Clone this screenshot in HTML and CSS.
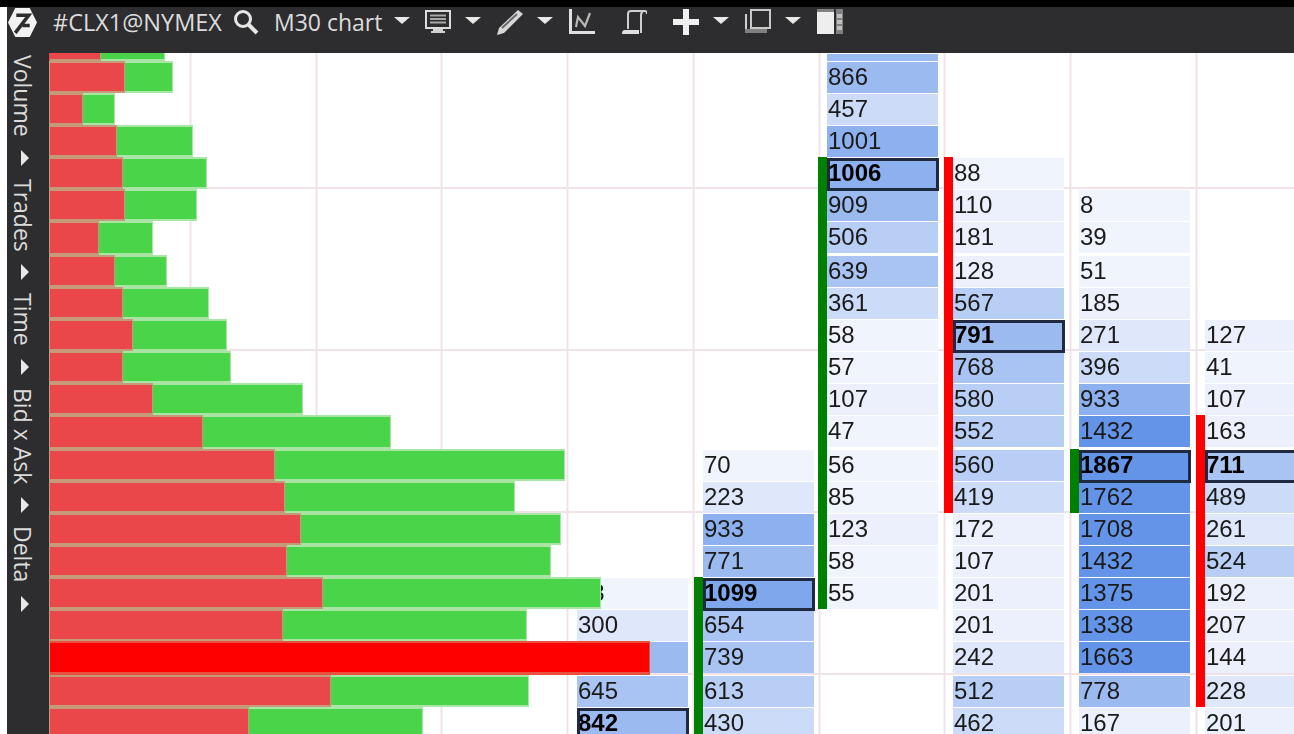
FILE: index.html
```html
<!DOCTYPE html>
<html lang="en">
<head>
    <title>#CLX1@NYMEX M30 chart</title>
    <meta charset="UTF-8">
    <meta name="viewport" content="width=device-width, initial-scale=1.0">
    <link rel="stylesheet" href="styles.css">
</head>
<body>
<div class="window">
    <div class="toolbar">
        <svg class="logo" viewBox="0 0 28 28"><path d="M7 0h14l7 14-7 14H7L0 14z" fill="#f2f2f2"/><path d="M8 7h12L7 24M14 17h7" fill="none" stroke="#2d2d2f" stroke-width="3.4"/></svg>
        <span class="symbol">#CLX1@NYMEX</span>
        <svg class="icon search" viewBox="0 0 26 26"><circle cx="10" cy="10" r="7.5" fill="none" stroke="#e6e6e6" stroke-width="3"/><path d="M15 15l9 9" stroke="#e6e6e6" stroke-width="4"/></svg>
        <span class="period">M30 chart</span>
        <i class="caret"></i>
        <svg class="icon monitor" viewBox="0 0 26 26"><path d="M1 2h24v17H1z" fill="none" stroke="#dcdcdc" stroke-width="2"/><path d="M5 6.500h16M5 10h16M5 13.500h16" stroke="#a8a8a8" stroke-width="2"/><path d="M8 20h10v2h2v2H6v-2h2z" fill="#d0d0d0"/></svg>
        <i class="caret"></i>
        <svg class="icon pencil" viewBox="0 0 26 26"><path d="M21 1l5 4L7 24l-7 2 2-7z" fill="#d8d8d8"/><path d="M5 19L20 5" stroke="#6a6a6a" stroke-width="2"/></svg>
        <i class="caret"></i>
        <svg class="icon stats" viewBox="0 0 26 26"><path d="M1.500 0v23.500H26" fill="none" stroke="#e0e0e0" stroke-width="3"/><path d="M7 18l2-10 7 9 5-13" fill="none" stroke="#b8b8b8" stroke-width="2.200"/></svg>
        <svg class="icon scroll" viewBox="0 0 26 26"><path d="M7 20V5c0-2 1-3 3-3h14c1 0 2 1 2 3M22 2c-1 1-2 2-2 4v18" fill="none" stroke="#cfcfcf" stroke-width="2"/><path d="M1 25c0-3 1-4 3-4h14v4z" fill="#e0e0e0"/></svg>
        <svg class="icon plus" viewBox="0 0 26 26"><path d="M13 0v26M0 13h26" stroke="#f0f0f0" stroke-width="6"/></svg>
        <i class="caret"></i>
        <svg class="icon windows" viewBox="0 0 26 26"><path d="M6 1h19v18H6z" fill="none" stroke="#c8c8c8" stroke-width="2"/><path d="M1 5v18" stroke="#d0d0d0" stroke-width="2"/><path d="M0 20h22v4H0z" fill="#808080"/></svg>
        <i class="caret"></i>
        <svg class="icon panels" viewBox="0 0 26 26"><path d="M0 0h26v25H0z" fill="#808080"/><path d="M0 3h17v22H0z" fill="#eeeeee"/><path d="M17 0h2v25h-2z" fill="#2d2d2f"/><path d="M20 5h5v4h-5zM20 11h5v4h-5zM20 17h5v4h-5z" fill="#c0c0c0"/></svg>
    </div>

    <div class="main">
        <div class="sidebar">
            <span class="side-label">Volume</span><i class="side-arrow"></i>
            <span class="side-label">Trades</span><i class="side-arrow"></i>
            <span class="side-label">Time</span><i class="side-arrow"></i>
            <span class="side-label">Bid x Ask</span><i class="side-arrow"></i>
            <span class="side-label">Delta</span><i class="side-arrow"></i>
        </div>

        <div class="chart">
            <div class="row first">
                <div class="bars"><b class="sell" style="width:51px"></b><b class="buy" style="width:64px"></b></div>
                <div class="slot"></div><div class="slot"></div>
                <div class="slot"><div class="cell s6"></div></div>
            </div>
            <div class="row">
                <div class="bars"><b class="sell" style="width:75px"></b><b class="buy" style="width:48px"></b></div>
                <div class="slot"></div><div class="slot"></div>
                <div class="slot"><div class="cell s6">866</div></div>
            </div>
            <div class="row">
                <div class="bars"><b class="sell" style="width:33px"></b><b class="buy" style="width:32px"></b></div>
                <div class="slot"></div><div class="slot"></div>
                <div class="slot"><div class="cell s3">457</div></div>
            </div>
            <div class="row">
                <div class="bars"><b class="sell" style="width:67px"></b><b class="buy" style="width:76px"></b></div>
                <div class="slot"></div><div class="slot"></div>
                <div class="slot"><div class="cell s7">1001</div></div>
            </div>
            <div class="row">
                <div class="bars"><b class="sell" style="width:73px"></b><b class="buy" style="width:84px"></b></div>
                <div class="slot"></div><div class="slot"></div>
                <div class="slot up"><div class="cell s7 poc">1006</div></div>
                <div class="slot down"><div class="cell s0">88</div></div>
            </div>
            <div class="row">
                <div class="bars"><b class="sell" style="width:75px"></b><b class="buy" style="width:72px"></b></div>
                <div class="slot"></div><div class="slot"></div>
                <div class="slot up"><div class="cell s6">909</div></div>
                <div class="slot down"><div class="cell s1">110</div></div>
                <div class="slot"><div class="cell s0">8</div></div>
            </div>
            <div class="row tall">
                <div class="bars"><b class="sell" style="width:49px"></b><b class="buy" style="width:54px"></b></div>
                <div class="slot"></div><div class="slot"></div>
                <div class="slot up"><div class="cell s4">506</div></div>
                <div class="slot down"><div class="cell s1">181</div></div>
                <div class="slot"><div class="cell s0">39</div></div>
            </div>
            <div class="row">
                <div class="bars"><b class="sell" style="width:65px"></b><b class="buy" style="width:52px"></b></div>
                <div class="slot"></div><div class="slot"></div>
                <div class="slot up"><div class="cell s5">639</div></div>
                <div class="slot down"><div class="cell s1">128</div></div>
                <div class="slot"><div class="cell s0">51</div></div>
            </div>
            <div class="row">
                <div class="bars"><b class="sell" style="width:73px"></b><b class="buy" style="width:86px"></b></div>
                <div class="slot"></div><div class="slot"></div>
                <div class="slot up"><div class="cell s3">361</div></div>
                <div class="slot down"><div class="cell s4">567</div></div>
                <div class="slot"><div class="cell s1">185</div></div>
            </div>
            <div class="row">
                <div class="bars"><b class="sell" style="width:83px"></b><b class="buy" style="width:94px"></b></div>
                <div class="slot"></div><div class="slot"></div>
                <div class="slot up"><div class="cell s0">58</div></div>
                <div class="slot down"><div class="cell s6 poc">791</div></div>
                <div class="slot"><div class="cell s2">271</div></div>
                <div class="slot"><div class="cell s1">127</div></div>
            </div>
            <div class="row">
                <div class="bars"><b class="sell" style="width:73px"></b><b class="buy" style="width:108px"></b></div>
                <div class="slot"></div><div class="slot"></div>
                <div class="slot up"><div class="cell s0">57</div></div>
                <div class="slot down"><div class="cell s5">768</div></div>
                <div class="slot"><div class="cell s3">396</div></div>
                <div class="slot"><div class="cell s0">41</div></div>
            </div>
            <div class="row">
                <div class="bars"><b class="sell" style="width:103px"></b><b class="buy" style="width:150px"></b></div>
                <div class="slot"></div><div class="slot"></div>
                <div class="slot up"><div class="cell s1">107</div></div>
                <div class="slot down"><div class="cell s4">580</div></div>
                <div class="slot"><div class="cell s7">933</div></div>
                <div class="slot"><div class="cell s1">107</div></div>
            </div>
            <div class="row tall">
                <div class="bars"><b class="sell" style="width:153px"></b><b class="buy" style="width:188px"></b></div>
                <div class="slot"></div><div class="slot"></div>
                <div class="slot up"><div class="cell s0">47</div></div>
                <div class="slot down"><div class="cell s4">552</div></div>
                <div class="slot"><div class="cell s10">1432</div></div>
                <div class="slot down"><div class="cell s1">163</div></div>
            </div>
            <div class="row">
                <div class="bars"><b class="sell" style="width:225px"></b><b class="buy" style="width:290px"></b></div>
                <div class="slot"></div>
                <div class="slot"><div class="cell s0">70</div></div>
                <div class="slot up"><div class="cell s0">56</div></div>
                <div class="slot down"><div class="cell s4">560</div></div>
                <div class="slot up"><div class="cell s10 poc">1867</div></div>
                <div class="slot down"><div class="cell s5 poc">711</div></div>
            </div>
            <div class="row">
                <div class="bars"><b class="sell" style="width:235px"></b><b class="buy" style="width:230px"></b></div>
                <div class="slot"></div>
                <div class="slot"><div class="cell s2">223</div></div>
                <div class="slot up"><div class="cell s0">85</div></div>
                <div class="slot down"><div class="cell s3">419</div></div>
                <div class="slot up"><div class="cell s10">1762</div></div>
                <div class="slot down"><div class="cell s3">489</div></div>
            </div>
            <div class="row">
                <div class="bars"><b class="sell" style="width:251px"></b><b class="buy" style="width:260px"></b></div>
                <div class="slot"></div>
                <div class="slot"><div class="cell s7">933</div></div>
                <div class="slot up"><div class="cell s1">123</div></div>
                <div class="slot"><div class="cell s1">172</div></div>
                <div class="slot"><div class="cell s10">1708</div></div>
                <div class="slot down"><div class="cell s2">261</div></div>
            </div>
            <div class="row">
                <div class="bars"><b class="sell" style="width:237px"></b><b class="buy" style="width:264px"></b></div>
                <div class="slot"></div>
                <div class="slot"><div class="cell s6">771</div></div>
                <div class="slot up"><div class="cell s0">58</div></div>
                <div class="slot"><div class="cell s1">107</div></div>
                <div class="slot"><div class="cell s10">1432</div></div>
                <div class="slot down"><div class="cell s4">524</div></div>
            </div>
            <div class="row">
                <div class="bars"><b class="sell" style="width:273px"></b><b class="buy" style="width:278px"></b></div>
                <div class="slot"><div class="cell s0">83</div></div>
                <div class="slot up"><div class="cell s8 poc">1099</div></div>
                <div class="slot up"><div class="cell s0">55</div></div>
                <div class="slot"><div class="cell s1">201</div></div>
                <div class="slot"><div class="cell s10">1375</div></div>
                <div class="slot down"><div class="cell s1">192</div></div>
            </div>
            <div class="row">
                <div class="bars"><b class="sell" style="width:233px"></b><b class="buy" style="width:244px"></b></div>
                <div class="slot"><div class="cell s2">300</div></div>
                <div class="slot up"><div class="cell s5">654</div></div>
                <div class="slot"></div>
                <div class="slot"><div class="cell s1">201</div></div>
                <div class="slot"><div class="cell s10">1338</div></div>
                <div class="slot down"><div class="cell s1">207</div></div>
            </div>
            <div class="row tall">
                <div class="bars"><b class="sell max" style="width:600px"></b></div>
                <div class="slot"><div class="cell s6"></div></div>
                <div class="slot up"><div class="cell s5">739</div></div>
                <div class="slot"></div>
                <div class="slot"><div class="cell s2">242</div></div>
                <div class="slot"><div class="cell s10">1663</div></div>
                <div class="slot down"><div class="cell s1">144</div></div>
            </div>
            <div class="row">
                <div class="bars"><b class="sell" style="width:281px"></b><b class="buy" style="width:198px"></b></div>
                <div class="slot"><div class="cell s5">645</div></div>
                <div class="slot up"><div class="cell s4">613</div></div>
                <div class="slot"></div>
                <div class="slot"><div class="cell s4">512</div></div>
                <div class="slot"><div class="cell s6">778</div></div>
                <div class="slot down"><div class="cell s2">228</div></div>
            </div>
            <div class="row">
                <div class="bars"><b class="sell" style="width:199px"></b><b class="buy" style="width:174px"></b></div>
                <div class="slot"><div class="cell s6 poc">842</div></div>
                <div class="slot up"><div class="cell s3">430</div></div>
                <div class="slot"></div>
                <div class="slot"><div class="cell s3">462</div></div>
                <div class="slot"><div class="cell s1">167</div></div>
                <div class="slot"><div class="cell s1">201</div></div>
            </div>
        </div>
    </div>
</div>
</body>
</html>
```

FILE: styles.css
```css
:root{
    --panel: #2d2d2f;
    --grid: #f0e2e7;
    --sell: #e9474a;
    --buy: #4ad44a;
}

html, body{
    margin: 0;
    padding: 0;
    background-color: #fff;
}

.window{
    width: 1294px;
    height: 734px;
    overflow: hidden;
    border-top: 7px solid #000;
    box-sizing: border-box;
    padding-left: 7px;
    display: flex;
    flex-direction: column;
}

/* toolbar */

.toolbar{
    height: 46px;
    flex: none;
    display: flex;
    align-items: center;
    background-color: var(--panel);
    color: #dcdcdc;
    font-family: "Open Sans", sans-serif;
    font-size: 23px;
    padding-bottom: 16px;
    box-sizing: border-box;
}

.logo{
    width: 29px;
    height: 29px;
    margin-left: 1px;
    flex: none;
}

.symbol{
    margin-left: 16px;
    width: 170px;
    white-space: nowrap;
    font-size: 23.5px;
}

.icon{
    width: 26px;
    height: 26px;
    flex: none;
}

.search{ margin-left: 10px; }
.period{ margin-left: 15px; width: 107px; white-space: nowrap; }
.monitor{ margin-left: 15px; }
.pencil{ margin-left: 16px; }
.stats{ margin-left: 16px; }
.scroll{ margin-left: 26px; }
.plus{ margin-left: 26px; }
.windows{ margin-left: 16px; }
.panels{ margin-left: 16px; }

.caret{
    width: 0;
    height: 0;
    flex: none;
    margin-left: 14px;
    margin-bottom: 3px;
    border-left: 8px solid transparent;
    border-right: 8px solid transparent;
    border-top: 7px solid #e8e8e8;
}

.period + .caret{ margin-left: 13px; }

/* left tabs */

.main{
    flex: 1;
    display: flex;
    min-height: 0;
}

.sidebar{
    width: 42px;
    flex: none;
    display: flex;
    flex-direction: column;
    align-items: center;
    gap: 13px;
    padding-top: 2px;
    padding-right: 10px;
    box-sizing: border-box;
    background-color: var(--panel);
    color: #dcdcdc;
    font-family: "Open Sans", sans-serif;
    font-size: 23px;
}

.side-label{
    writing-mode: vertical-rl;
    white-space: nowrap;
    line-height: 22px;
}

.side-arrow{
    width: 0;
    height: 0;
    border-top: 8px solid transparent;
    border-bottom: 8px solid transparent;
    border-left: 8px solid #e8e8e8;
    margin-left: 4px;
}

/* chart */

.chart{
    flex: 1;
    min-width: 0;
    overflow: hidden;
    background-color: #fff;
    background-image:
        repeating-linear-gradient(90deg, transparent 0, transparent 123.75px, var(--grid) 123.75px, var(--grid) 125.75px),
        repeating-linear-gradient(180deg, transparent 0, transparent 160px, var(--grid) 160px, var(--grid) 162px);
    background-position: 16.5px 0, 0 -26px;
    font-family: "Liberation Sans", Arial, sans-serif;
    font-size: 24px;
    color: #1a1a1a;
    filter: blur(0.35px);
}

.row{
    display: grid;
    grid-template-columns: 519px 126px 124px 126px 126px 126px 98px;
    height: 32px;
}

.row.tall{ height: 34px; }
.row.first{ height: 8px; }

.bars{
    display: flex;
    z-index: 1;
    position: relative;
    border-left: 1px solid #c49a78;
}

.sell, .buy{
    display: block;
    flex: none;
    box-sizing: border-box;
    border-style: solid;
}

.sell{
    background-color: var(--sell);
    border-color: #c49a78;
    border-width: 2px 1px 2px 0;
}

.buy{
    background-color: var(--buy);
    border-color: #a9e6a5;
    border-width: 2px 1px 2px 0;
}

.sell.max{
    background-color: #f00;
    border-color: #e9503f;
    border-width: 2px 1px 3px 0;
}

.first .sell, .first .buy{
    border-top-width: 0;
}

.first .bars{
    border-left-color: var(--sell);
}

.slot{
    min-width: 0;
    background-repeat: no-repeat;
    background-size: 9px 100%;
}

.slot.up{ background-image: linear-gradient(#008000, #008000); }
.slot.down{ background-image: linear-gradient(#f00, #f00); }

.cell{
    width: 111px;
    height: 31px;
    margin-top: 1px;
    margin-left: 9px;
    box-sizing: border-box;
    line-height: 29px;
    padding-left: 1px;
    white-space: nowrap;
}

.first .cell{ height: 7px; }

.cell.poc{
    font-weight: bold;
    color: #000;
    position: relative;
}

.cell.poc::after{
    content: "";
    position: absolute;
    left: 0;
    right: -1px;
    top: 0;
    bottom: -2px;
    box-sizing: border-box;
    border: 3px solid #1f2a40;
}

.s0{ background-color: #f0f4fd; }
.s1{ background-color: #ebf0fc; }
.s2{ background-color: #dfe8fb; }
.s3{ background-color: #cbdbf8; }
.s4{ background-color: #b8cef5; }
.s5{ background-color: #a9c4f2; }
.s6{ background-color: #9bbaf0; }
.s7{ background-color: #8db1ee; }
.s8{ background-color: #7fa7ec; }
.s10{ background-color: #6394e8; }
```
